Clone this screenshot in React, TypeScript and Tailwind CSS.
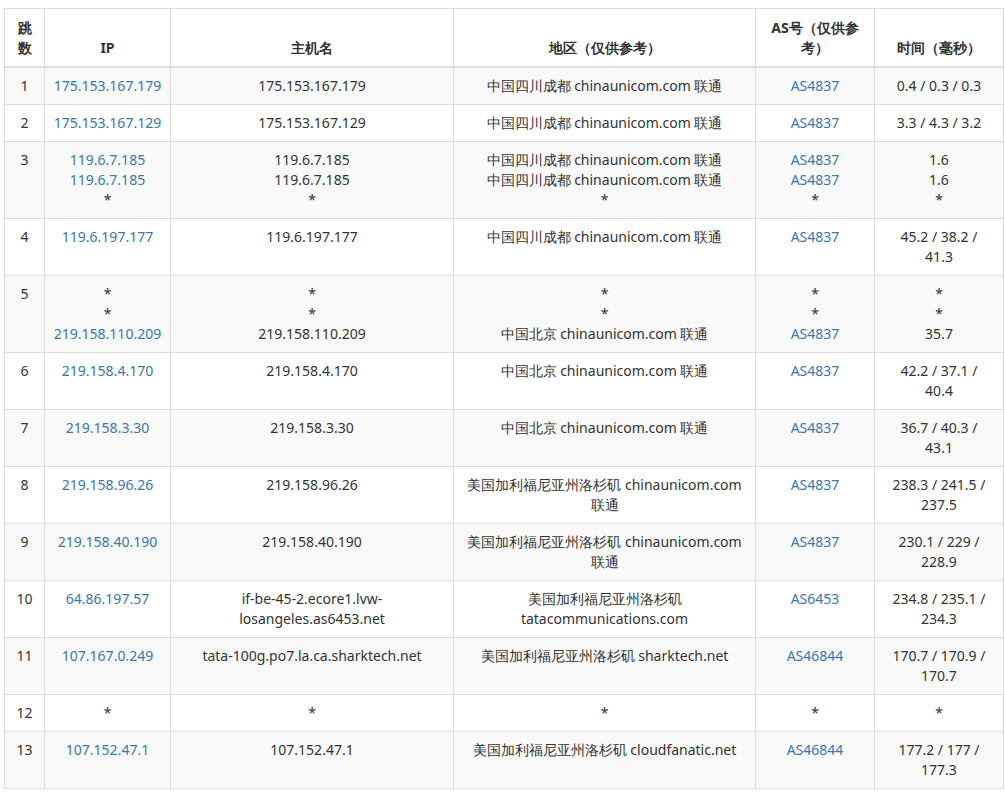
const rows: [string, string[], string[], string[], string[], string[]][] = [
  ["1", ["175.153.167.179"], ["175.153.167.179"], ["中国四川成都 chinaunicom.com 联通"], ["AS4837"], ["0.4 / 0.3 / 0.3"]],
  ["2", ["175.153.167.129"], ["175.153.167.129"], ["中国四川成都 chinaunicom.com 联通"], ["AS4837"], ["3.3 / 4.3 / 3.2"]],
  ["3", ["119.6.7.185", "119.6.7.185", "*"], ["119.6.7.185", "119.6.7.185", "*"], ["中国四川成都 chinaunicom.com 联通", "中国四川成都 chinaunicom.com 联通", "*"], ["AS4837", "AS4837", "*"], ["1.6", "1.6", "*"]],
  ["4", ["119.6.197.177"], ["119.6.197.177"], ["中国四川成都 chinaunicom.com 联通"], ["AS4837"], ["45.2 / 38.2 /", "41.3"]],
  ["5", ["*", "*", "219.158.110.209"], ["*", "*", "219.158.110.209"], ["*", "*", "中国北京 chinaunicom.com 联通"], ["*", "*", "AS4837"], ["*", "*", "35.7"]],
  ["6", ["219.158.4.170"], ["219.158.4.170"], ["中国北京 chinaunicom.com 联通"], ["AS4837"], ["42.2 / 37.1 /", "40.4"]],
  ["7", ["219.158.3.30"], ["219.158.3.30"], ["中国北京 chinaunicom.com 联通"], ["AS4837"], ["36.7 / 40.3 /", "43.1"]],
  ["8", ["219.158.96.26"], ["219.158.96.26"], ["美国加利福尼亚州洛杉矶 chinaunicom.com", "联通"], ["AS4837"], ["238.3 / 241.5 /", "237.5"]],
  ["9", ["219.158.40.190"], ["219.158.40.190"], ["美国加利福尼亚州洛杉矶 chinaunicom.com", "联通"], ["AS4837"], ["230.1 / 229 /", "228.9"]],
  ["10", ["64.86.197.57"], ["if-be-45-2.ecore1.lvw-", "losangeles.as6453.net"], ["美国加利福尼亚州洛杉矶", "tatacommunications.com"], ["AS6453"], ["234.8 / 235.1 /", "234.3"]],
  ["11", ["107.167.0.249"], ["tata-100g.po7.la.ca.sharktech.net"], ["美国加利福尼亚州洛杉矶 sharktech.net"], ["AS46844"], ["170.7 / 170.9 /", "170.7"]],
  ["12", ["*"], ["*"], ["*"], ["*"], ["*"]],
  ["13", ["107.152.47.1"], ["107.152.47.1"], ["美国加利福尼亚州洛杉矶 cloudfanatic.net"], ["AS46844"], ["177.2 / 177 /", "177.3"]],
];

function Lines({ items, link }: { items: string[]; link?: boolean }) {
  return (
    <>
      {items.map((t, i) => (
        <div key={i} className={"whitespace-nowrap " + (link && t !== "*" ? "text-[#3a77ab]" : "")}>
          {t}
        </div>
      ))}
    </>
  );
}

export default function App() {
  const cell = "border border-[#dddddd] px-2 pt-2 pb-2 align-top text-center";
  return (
    <div className="bg-white pl-1 pt-2 pr-[2px] font-['Open_Sans','Noto_Sans_CJK_SC',sans-serif] text-[14px] leading-5 text-[#333]">
      <table className="w-[999px] table-fixed border-collapse">
        <colgroup>
          <col className="w-[40px]" />
          <col className="w-[126px]" />
          <col className="w-[283px]" />
          <col className="w-[302px]" />
          <col className="w-[119px]" />
          <col className="w-[129px]" />
        </colgroup>
        <thead>
          <tr className="font-bold">
            {["跳数", "IP", "主机名", "地区（仅供参考）", "AS号（仅供参考）", "时间（毫秒）"].map((h) => (
              <th key={h} className="h-[58px] border border-b-2 border-[#dddddd] px-2 py-2 align-bottom text-center">
                {h}
              </th>
            ))}
          </tr>
        </thead>
        <tbody>
          {rows.map(([n, ip, host, area, as, time], i) => (
            <tr key={n} className={i % 2 === 0 ? "bg-[#f9f9f9]" : "bg-white"}>
              <td className={cell + " px-1"}>{n}</td>
              <td className={cell}><Lines items={ip} link /></td>
              <td className={cell}><Lines items={host} /></td>
              <td className={cell}><Lines items={area} /></td>
              <td className={cell}><Lines items={as} link /></td>
              <td className={cell}><Lines items={time} /></td>
            </tr>
          ))}
        </tbody>
      </table>
    </div>
  );
}
